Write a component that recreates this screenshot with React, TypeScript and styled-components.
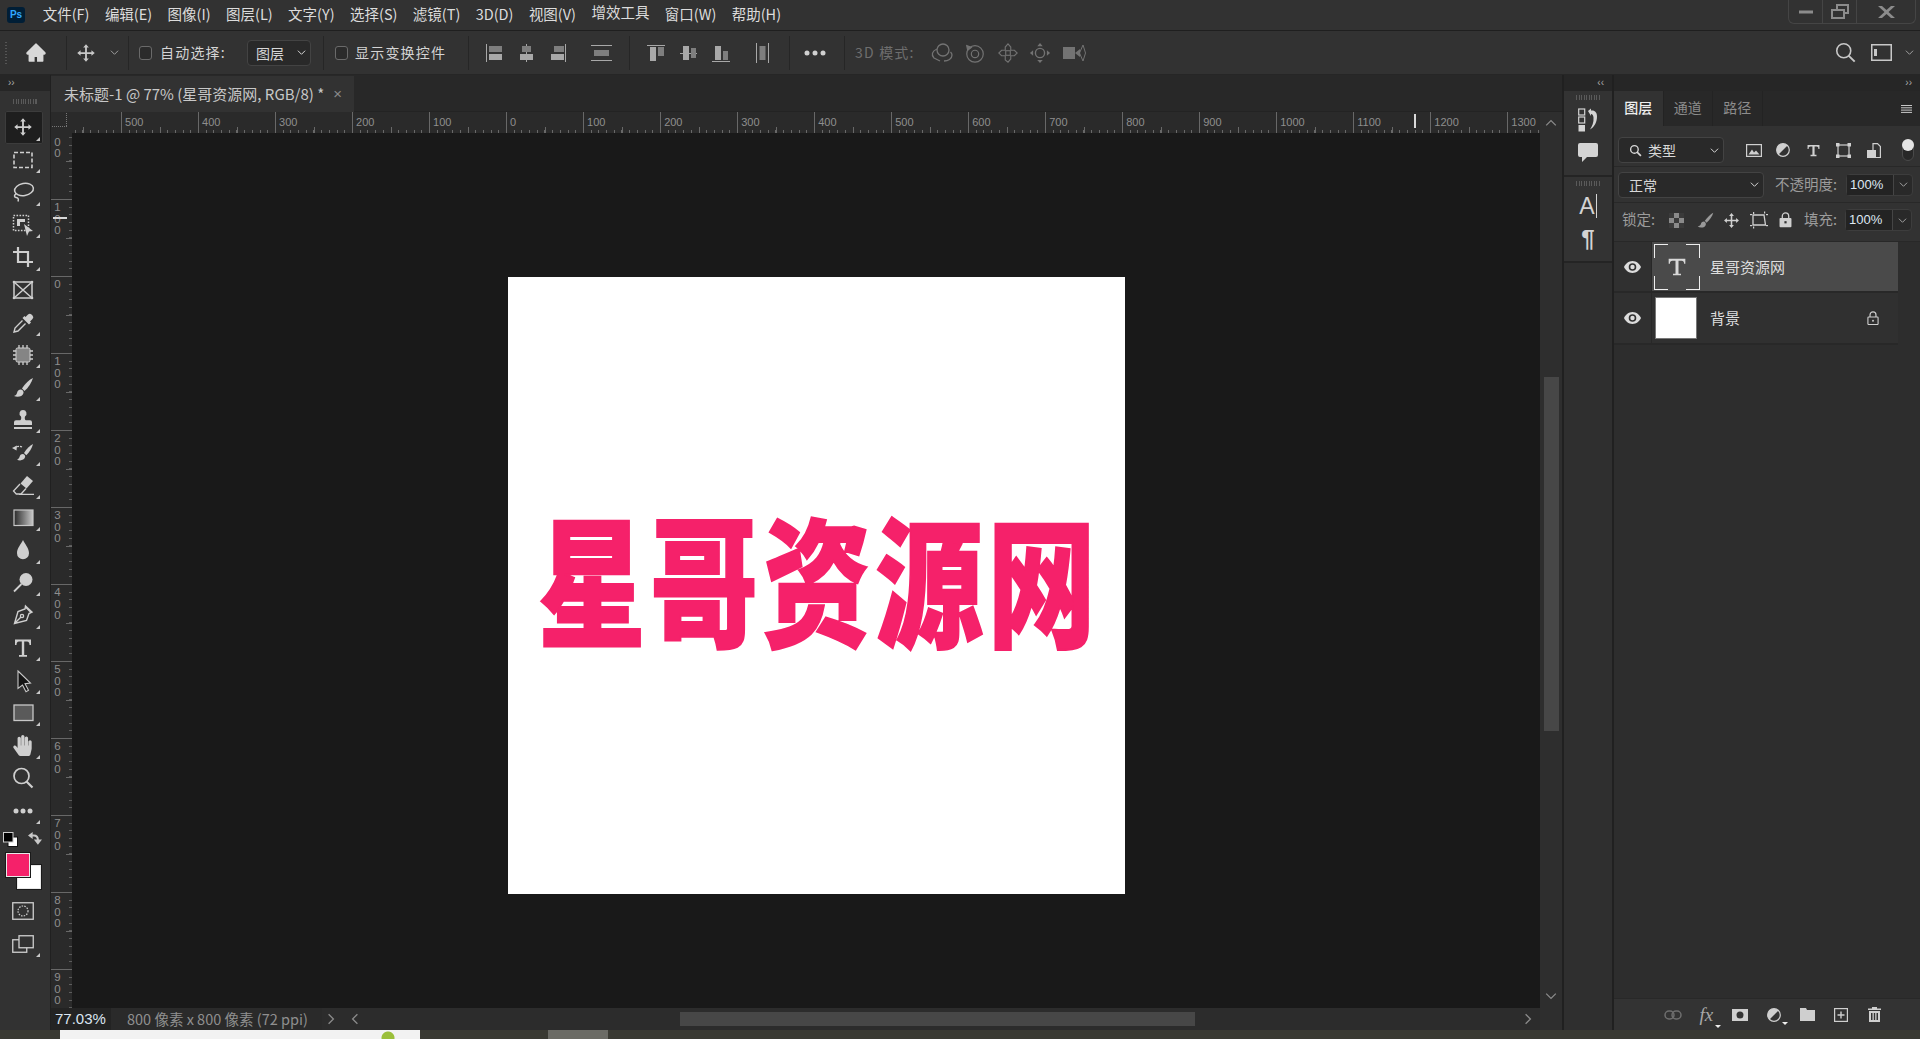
import React from 'react'
import styled, { createGlobalStyle } from 'styled-components'
import { FaHandPaper } from 'react-icons/fa'
import { AiFillHome } from 'react-icons/ai'

const GlobalStyle = createGlobalStyle`
    html, body {
        margin: 0;
        padding: 0;
        background: #3a3a33;
        overflow: hidden;
    }
    * {
        box-sizing: border-box;
    }
`

const UI_FONT = `"Noto Sans CJK SC", "Liberation Sans", sans-serif`
const NUM_FONT = `"Liberation Sans", "Noto Sans CJK SC", sans-serif`

const Window = styled.div`
    width: 1920px;
    height: 1039px;
    display: flex;
    flex-direction: column;
    background: #222;
    color: #d8d8d8;
    font-family: ${UI_FONT};
    overflow: hidden;
`

/* ---- menu bar ---- */

const MenuBar = styled.div`
    height: 31px;
    flex: none;
    display: flex;
    align-items: flex-start;
    background: #323232;
    border-bottom: 1px solid #1f1f1f;
`
const PsLogo = styled.div`
    width: 18px;
    height: 16px;
    margin: 7px 10px 0 7px;
    background: #001e36;
    border-radius: 3px;
    color: #31a8ff;
    font: bold 10px/16px ${NUM_FONT};
    text-align: center;
`
const MenuItem = styled.div<{ $up?: boolean }>`
    padding: 0 7.7px;
    font-size: 14.5px;
    line-height: 20px;
    margin-top: ${(p) => (p.$up ? 2 : 4)}px;
    color: #dcdcdc;
    white-space: nowrap;
`
const WinControls = styled.div`
    margin-left: auto;
    margin-right: 4px;
    width: 128px;
    height: 24px;
    display: flex;
    border: 1px solid #454545;
    border-top: none;
    border-radius: 0 0 6px 6px;
`
const WinButton = styled.div<{ $w: number; $last?: boolean }>`
    width: ${(p) => p.$w}px;
    flex: none;
    display: flex;
    align-items: center;
    justify-content: center;
    color: #8c8c8c;
    border-right: ${(p) => (p.$last ? 'none' : '1px solid #454545')};
`

/* ---- options bar ---- */

const OptionsBar = styled.div`
    height: 44px;
    flex: none;
    display: flex;
    align-items: center;
    background: #323232;
    border-bottom: 1px solid #262626;
`
const Grip = styled.div`
    width: 2px;
    height: 22px;
    margin: 0 18px 0 5px;
    background: repeating-linear-gradient(to bottom, #555 0 1px, transparent 1px 3px);
`
const OptSep = styled.div<{ $l: number; $r: number }>`
    width: 1px;
    height: 34px;
    flex: none;
    margin: 0 ${(p) => p.$r}px 0 ${(p) => p.$l}px;
    background: #262626;
`
const OptSlot = styled.div<{ $w: number; $ml?: number; $c?: string }>`
    width: ${(p) => p.$w}px;
    flex: none;
    margin-left: ${(p) => p.$ml ?? 0}px;
    display: flex;
    align-items: center;
    justify-content: center;
    color: ${(p) => p.$c ?? '#a0a0a0'};
`
const CheckBox = styled.div<{ $ml: number }>`
    width: 13px;
    height: 14px;
    flex: none;
    margin-left: ${(p) => p.$ml}px;
    border: 1px solid #6a6a6a;
    border-radius: 3px;
    background: #2b2b2b;
`
const OptLabel = styled.div<{ $ml: number; $c?: string; $w: number }>`
    width: ${(p) => p.$w}px;
    flex: none;
    margin-left: ${(p) => p.$ml}px;
    padding-bottom: 2px;
    font-size: 14px;
    letter-spacing: 1.2px;
    color: ${(p) => p.$c ?? '#d4d4d4'};
    white-space: nowrap;
`
const DropBox = styled.div<{ $w: number; $h: number; $ml?: number; $pl: number }>`
    width: ${(p) => p.$w}px;
    height: ${(p) => p.$h}px;
    flex: none;
    margin-left: ${(p) => p.$ml ?? 0}px;
    padding: 0 4px 0 ${(p) => p.$pl}px;
    display: flex;
    align-items: center;
    justify-content: space-between;
    background: #292929;
    border: 1px solid #434343;
    border-radius: 4px;
    font-size: 14px;
    color: #d8d8d8;
`
const DropText = styled.span`
    flex: 1;
    padding-left: 6px;
`
const OptRight = styled.div`
    margin-left: auto;
    display: flex;
    align-items: center;
    padding-right: 6px;
    color: #c8c8c8;
`

/* ---- workspace ---- */

const Workspace = styled.div`
    flex: 1;
    min-height: 0;
    display: flex;
    background: #202020;
`
const ToolPanel = styled.div`
    width: 50px;
    flex: none;
    margin-right: 1px;
    display: flex;
    flex-direction: column;
    background: #323232;
`
const CollapseBar = styled.div<{ $align?: string }>`
    height: 16px;
    flex: none;
    display: flex;
    align-items: center;
    justify-content: ${(p) => p.$align ?? 'flex-start'};
    padding: 0 8px;
    background: #262626;
    color: #a8a8a8;
    font: 10px/16px ${NUM_FONT};
`
const GripRow = styled.div<{ $h?: number }>`
    height: ${(p) => p.$h ?? 20}px;
    flex: none;
    display: flex;
    align-items: center;
    justify-content: center;
    &::before {
        content: '';
        width: 24px;
        height: 5px;
        background: repeating-linear-gradient(to right, #5a5a5a 0 1px, transparent 1px 2.5px);
    }
`
const ToolBtn = styled.div<{ $active?: boolean; $corner?: boolean }>`
    position: relative;
    height: 32.55px;
    flex: none;
    margin: 0 7px 0 5px;
    padding-right: 3px;
    display: flex;
    align-items: center;
    justify-content: center;
    color: #cfcfcf;
    background: ${(p) => (p.$active ? '#1e1e1e' : 'transparent')};
    box-shadow: ${(p) => (p.$active ? 'inset 0 0 0 1px #3c3c3c' : 'none')};
    border-radius: 2px;
    &::after {
        content: '';
        display: ${(p) => (p.$corner ? 'block' : 'none')};
        position: absolute;
        right: 3px;
        bottom: 3px;
        border-style: solid;
        border-width: 0 0 4px 4px;
        border-color: transparent transparent #c8c8c8 transparent;
    }
`
const MiniColors = styled.div`
    height: 15px;
    flex: none;
    margin-top: 5px;
    padding: 0 8px 0 3px;
    display: flex;
    justify-content: space-between;
    color: #c8c8c8;
`
const Swatches = styled.div`
    position: relative;
    height: 42px;
    flex: none;
    margin-top: 6px;
`
const Swatch = styled.div<{ $c: string; $x: number; $y: number; $z: number }>`
    position: absolute;
    left: ${(p) => p.$x}px;
    top: ${(p) => p.$y}px;
    width: 24px;
    height: 24px;
    z-index: ${(p) => p.$z};
    background: ${(p) => p.$c};
    border: 1px solid #e8e8e8;
    box-shadow: 0 0 0 1px #1a1a1a;
`

const DocArea = styled.div`
    flex: 1;
    min-width: 0;
    display: flex;
    flex-direction: column;
`
const TabRow = styled.div`
    height: 37px;
    flex: none;
    display: flex;
    background: #282828;
    border-bottom: 1px solid #232323;
`
const DocTab = styled.div`
    width: 303px;
    height: 36px;
    margin-top: 1px;
    padding: 0 0 2px 13px;
    display: flex;
    align-items: center;
    background: #323232;
    font-size: 15px;
    color: #c8c8c8;
    white-space: nowrap;
`
const TabClose = styled.span`
    margin-left: 9px;
    color: #8a8a8a;
    font: 15px ${NUM_FONT};
`

const RulerRow = styled.div`
    height: 21px;
    flex: none;
    display: flex;
`
const RulerCorner = styled.div`
    width: 21px;
    flex: none;
    background-color: #2a2a2a;
    background-image: repeating-linear-gradient(to right, #777 0 1px, transparent 1px 2px),
        repeating-linear-gradient(to bottom, #777 0 1px, transparent 1px 2px);
    background-size: 16px 1px, 1px 14px;
    background-position: 1px 14px, 15px 1px;
    background-repeat: no-repeat;
`
const HRuler = styled.div`
    flex: 1;
    min-width: 0;
    position: relative;
    display: flex;
    overflow: hidden;
    background: #2a2a2a;
`
const HCells = styled.div`
    display: flex;
    margin-left: -28px;
`
const HCell = styled.div`
    position: relative;
    width: 77.03px;
    height: 21px;
    flex: none;
    padding: 4px 0 0 3px;
    border-left: 1px solid #686868;
    font: 11px/13px ${NUM_FONT};
    color: #8e8e8e;
    background: repeating-linear-gradient(to right, transparent 0 6.7px, #686868 6.7px 7.7px) left bottom / 100% 3px no-repeat;
    &::after {
        content: '';
        position: absolute;
        left: 37.5px;
        bottom: 0;
        width: 1px;
        height: 6px;
        background: #686868;
    }
`
const HMarker = styled.div`
    position: absolute;
    left: 1342px;
    top: 2px;
    width: 2px;
    height: 14px;
    background: #d8d8d8;
`
const ScrollCap = styled.div`
    width: 22px;
    flex: none;
    display: flex;
    align-items: center;
    justify-content: center;
    background: #2e2e2e;
    color: #8a8a8a;
`
const MainRow = styled.div`
    flex: 1;
    min-height: 0;
    display: flex;
`
const VRuler = styled.div`
    position: relative;
    width: 21px;
    flex: none;
    overflow: hidden;
    background: #2a2a2a;
`
const VCells = styled.div`
    margin-top: -11px;
`
const VCell = styled.div`
    position: relative;
    height: 77.03px;
    padding: 2px 8px 0 0;
    border-top: 1px solid #686868;
    display: flex;
    flex-direction: column;
    align-items: center;
    font: 11.5px/11.5px ${NUM_FONT};
    color: #8e8e8e;
    background: repeating-linear-gradient(to bottom, transparent 0 6.7px, #5c5c5c 6.7px 7.7px) right top / 3px 100% no-repeat;
    &::after {
        content: '';
        position: absolute;
        top: 37.5px;
        right: 0;
        width: 6px;
        height: 1px;
        background: #686868;
    }
`
const VDigit = styled.span`
    height: 11.5px;
`
const VMarker = styled.div`
    position: absolute;
    left: 2px;
    top: 84px;
    width: 14px;
    height: 2px;
    background: #d8d8d8;
`
const Pasteboard = styled.div`
    flex: 1;
    min-width: 0;
    padding: 144px 0 0 436px;
    background: #191919;
`
const Document = styled.div`
    width: 617px;
    height: 617px;
    padding: 0 0 22px 4px;
    display: flex;
    align-items: center;
    justify-content: center;
    background: #fff;
`
const DocText = styled.div`
    font-family: "Noto Sans CJK SC", sans-serif;
    font-weight: 900;
    font-size: 140px;
    line-height: 1;
    letter-spacing: 6px;
    color: #f5216a;
    -webkit-text-stroke: 2px #f5216a;
    white-space: nowrap;
    transform: scaleX(0.77);
`
const VScroll = styled.div`
    width: 22px;
    flex: none;
    display: flex;
    flex-direction: column;
    align-items: center;
    background: #2e2e2e;
    color: #8a8a8a;
`
const VThumb = styled.div`
    width: 15px;
    height: 354px;
    margin-top: 244px;
    flex: none;
    background: #474747;
`
const VArrowBottom = styled.div`
    margin-top: auto;
    margin-bottom: 6px;
    display: flex;
`
const StatusBar = styled.div`
    height: 22px;
    flex: none;
    display: flex;
    align-items: stretch;
    background: #2c2c2c;
`
const ZoomBox = styled.div`
    width: 60px;
    flex: none;
    padding-left: 4px;
    background: #232323;
    color: #dbe6f2;
    font: 15px/22px ${NUM_FONT};
`
const InfoBox = styled.div`
    width: 211px;
    flex: none;
    padding-left: 16px;
    background: #2a2a2a;
    color: #8f8f8f;
    font-size: 14.5px;
    line-height: 21px;
    white-space: nowrap;
`
const StatusCell = styled.div<{ $w: number }>`
    width: ${(p) => p.$w}px;
    flex: none;
    display: flex;
    align-items: center;
    justify-content: center;
    color: #8a8a8a;
`
const HTrack = styled.div`
    flex: 1;
    min-width: 0;
    display: flex;
    align-items: center;
    padding-left: 310px;
    padding-right: 6px;
    color: #8a8a8a;
`
const HThumb = styled.div`
    width: 515px;
    height: 14px;
    background: #474747;
`
const HArrow = styled.div`
    margin-left: auto;
    display: flex;
`

/* ---- dock ---- */

const Dock = styled.div`
    width: 48px;
    flex: none;
    margin: 0 2px;
    display: flex;
    flex-direction: column;
    background: #2f2f2f;
`
const DockGroup = styled.div`
    height: 86px;
    flex: none;
    display: flex;
    flex-direction: column;
    align-items: center;
    background: #333;
    border-bottom: 2px solid #242424;
`
const DockBtn = styled.div`
    height: 33px;
    flex: none;
    display: flex;
    align-items: center;
    justify-content: center;
    color: #d4d4d4;
`
const DockA = styled.span`
    font: 23px/24px ${NUM_FONT};
    color: #d4d4d4;
    border-right: 1px solid #d4d4d4;
    padding-right: 1px;
`
const DockPara = styled.span`
    font: bold 24px/24px ${NUM_FONT};
    color: #d4d4d4;
`

/* ---- layers panel ---- */

const LayersPanel = styled.div`
    width: 306px;
    flex: none;
    display: flex;
    flex-direction: column;
    background: #2d2d2d;
`
const PanelTabs = styled.div`
    height: 35px;
    flex: none;
    display: flex;
    align-items: stretch;
    background: #282828;
    color: #c8c8c8;
`
const PanelTab = styled.div<{ $active?: boolean }>`
    width: 49.5px;
    flex: none;
    padding-bottom: 3px;
    display: flex;
    align-items: center;
    justify-content: center;
    font-size: 14px;
    font-weight: ${(p) => (p.$active ? 500 : 400)};
    color: ${(p) => (p.$active ? '#efefef' : '#8c8c8c')};
    background: ${(p) => (p.$active ? '#323232' : 'transparent')};
    border-right: 1px solid #232323;
`
const PanelMenu = styled.div`
    margin-left: auto;
    padding-right: 8px;
    display: flex;
    align-items: center;
`
const PanelRow = styled.div<{ $h: number; $pt?: number; $pb?: number }>`
    height: ${(p) => p.$h}px;
    flex: none;
    padding: ${(p) => p.$pt ?? 0}px 8px ${(p) => p.$pb ?? 0}px 4px;
    display: flex;
    align-items: center;
    background: #323232;
    border-bottom: 1px solid #282828;
    color: #cfcfcf;
`
const FilterIcon = styled.div<{ $w: number; $ml: number }>`
    width: ${(p) => p.$w}px;
    flex: none;
    margin-left: ${(p) => p.$ml}px;
    display: flex;
    justify-content: center;
    color: #d0d0d0;
`
const FilterToggle = styled.div`
    width: 12px;
    height: 22px;
    margin-left: 21px;
    border: 1px solid #4a4a4a;
    border-radius: 6px;
    background: #282828;
    &::before {
        content: '';
        display: block;
        width: 12px;
        height: 12px;
        margin: -1px 0 0 -1px;
        border-radius: 50%;
        background: #e4e4e4;
    }
`
const FieldLabel = styled.div<{ $ml: number; $w: number }>`
    width: ${(p) => p.$w}px;
    flex: none;
    margin-left: ${(p) => p.$ml}px;
    padding-bottom: 3px;
    font-size: 14.5px;
    color: #9c9c9c;
    white-space: nowrap;
`
const ValueField = styled.div<{ $ml?: number }>`
    width: 67px;
    height: 22px;
    flex: none;
    margin-left: ${(p) => p.$ml ?? 0}px;
    display: flex;
    background: #292929;
    border: 1px solid #3d3d3d;
    border-radius: 4px;
    font: 13px/20px ${NUM_FONT};
    color: #dfe8f2;
`
const ValueText = styled.div`
    width: 47px;
    flex: none;
    padding-left: 3px;
    background: #232323;
    border-right: 1px solid #454545;
`
const ValueArrow = styled.div`
    flex: 1;
    display: flex;
    align-items: center;
    justify-content: center;
    color: #a0a0a0;
`
const LayerList = styled.div`
    flex: 1;
    min-height: 0;
    display: flex;
    flex-direction: column;
    width: 284px;
`
const LayerRow = styled.div<{ $h: number }>`
    height: ${(p) => p.$h}px;
    flex: none;
    display: flex;
    align-items: stretch;
    border-bottom: 2px solid #282828;
`
const EyeCol = styled.div`
    width: 38px;
    flex: none;
    display: flex;
    align-items: center;
    justify-content: center;
    color: #dcdcdc;
    background: #303030;
    border-right: 1px solid #282828;
`
const LayerBody = styled.div<{ $selected?: boolean }>`
    flex: 1;
    min-width: 0;
    display: flex;
    align-items: center;
    background: ${(p) => (p.$selected ? '#4a4a4a' : '#303030')};
`
const TypeThumb = styled.div`
    width: 46px;
    height: 46px;
    margin-left: 2px;
    flex: none;
    display: flex;
    align-items: center;
    justify-content: center;
    color: #d8d8d8;
    background:
        linear-gradient(#eee, #eee) 0 0 / 14px 1px no-repeat,
        linear-gradient(#eee, #eee) 0 0 / 1px 14px no-repeat,
        linear-gradient(#eee, #eee) 100% 0 / 14px 1px no-repeat,
        linear-gradient(#eee, #eee) 100% 0 / 1px 14px no-repeat,
        linear-gradient(#eee, #eee) 0 100% / 14px 1px no-repeat,
        linear-gradient(#eee, #eee) 0 100% / 1px 14px no-repeat,
        linear-gradient(#eee, #eee) 100% 100% / 14px 1px no-repeat,
        linear-gradient(#eee, #eee) 100% 100% / 1px 14px no-repeat;
`
const WhiteThumb = styled.div`
    width: 40px;
    height: 40px;
    margin-left: 4px;
    flex: none;
    background: #fff;
    box-shadow: 0 0 0 1px #777;
`
const LayerName = styled.div<{ $ml: number }>`
    margin-left: ${(p) => p.$ml}px;
    padding-bottom: 1px;
    font-size: 15px;
    color: #dedede;
    white-space: nowrap;
`
const LayerLock = styled.div`
    margin-left: auto;
    margin-right: 19px;
    display: flex;
    color: #cfcfcf;
`
const PanelBottom = styled.div`
    height: 32px;
    flex: none;
    display: flex;
    align-items: center;
    padding-left: 42px;
    background: #333;
    border-top: 1px solid #282828;
    color: #cfcfcf;
`
const BottomBtn = styled.div<{ $c?: string; $corner?: boolean }>`
    position: relative;
    width: 33.6px;
    flex: none;
    display: flex;
    justify-content: center;
    color: ${(p) => p.$c ?? '#cfcfcf'};
    &::after {
        content: '';
        display: ${(p) => (p.$corner ? 'block' : 'none')};
        position: absolute;
        right: 2px;
        bottom: -3px;
        border-style: solid;
        border-width: 3px 3px 0;
        border-color: #eee transparent transparent;
    }
`
const FxMark = styled.span`
    font: italic 19px/20px "Liberation Serif", serif;
    color: #a8a8a8;
`

/* ---- desktop behind the window ---- */

const DesktopStrip = styled.div`
    height: 9px;
    flex: none;
    display: flex;
    background: #3a3a33;
`
const TaskWindow = styled.div`
    width: 360px;
    margin-left: 60px;
    background: radial-gradient(circle at 328px 8px, #9bbf3a 0 6px, transparent 7px), #f2f2f2;
`
const TaskBlock = styled.div`
    width: 60px;
    margin-left: 128px;
    background: #6b6b65;
`

/* ---- icons ---- */

const Svg = styled.svg`
    display: block;
    flex: none;
`
type IcoProps = { w?: number; h?: number; vb?: string; children: React.ReactNode }
const Ico: React.FC<IcoProps> = ({ w = 24, h, vb = '0 0 24 24', children }) => (
    <Svg width={w} height={h ?? w} viewBox={vb} fill="currentColor">
        {children}
    </Svg>
)
const Chevron: React.FC<{ dir?: 'down' | 'up' | 'left' | 'right'; s?: number }> = ({ dir = 'down', s = 9 }) => {
    const d = { down: 'M1 3l4 4 4-4', up: 'M1 7l4-4 4 4', left: 'M7 1L3 5l4 4', right: 'M3 1l4 4-4 4' }[dir]
    return (
        <Ico w={s} vb="0 0 10 10">
            <path d={d} fill="none" stroke="currentColor" strokeWidth="1.1" />
        </Ico>
    )
}

const MoveGlyph = <path d="M12 1.5l3.4 4h-2.3V11h5.4V8.6l4 3.4-4 3.4v-2.3h-5.4v5.4h2.3l-3.4 4-3.4-4h2.3v-5.4H5.5v2.3l-4-3.4 4-3.4V11h5.4V5.5H8.6z" />

const tools: { key: string; node: React.ReactNode; corner?: boolean; active?: boolean }[] = [
    { key: 'move', active: true, corner: true, node: <Ico w={20}>{MoveGlyph}</Ico> },
    { key: 'marquee', corner: true, node: <Ico w={24}><rect x="3" y="4.5" width="18" height="15" fill="none" stroke="currentColor" strokeWidth="1.6" strokeDasharray="4 2" /></Ico> },
    { key: 'lasso', corner: true, node: <Ico w={24}><g fill="none" stroke="currentColor" strokeWidth="1.5"><ellipse cx="13" cy="9.5" rx="9.5" ry="6" transform="rotate(-10 13 9.5)" /><path d="M5 14c-2 1-2 3 0 3.5s3 1 2 4" /></g></Ico> },
    { key: 'object', corner: true, node: <Ico w={24}><rect x="2.5" y="2.5" width="15" height="15" fill="none" stroke="currentColor" strokeWidth="1.5" strokeDasharray="1.6 1.4" /><path d="M6 6h8v3H9v4H6z" /><path d="M13 11l9 7-4 .5-2 4.5z" /></Ico> },
    { key: 'crop', corner: true, node: <Ico w={24}><path d="M7 2v15h15M2 7h15v15" fill="none" stroke="currentColor" strokeWidth="2.2" /></Ico> },
    { key: 'frame', node: <Ico w={24}><g fill="none" stroke="currentColor" strokeWidth="1.5"><rect x="3" y="4" width="18" height="16" /><path d="M3 4l18 16M21 4L3 20" /></g><circle cx="3" cy="4" r="1.3" /><circle cx="21" cy="4" r="1.3" /><circle cx="3" cy="20" r="1.3" /><circle cx="21" cy="20" r="1.3" /></Ico> },
    { key: 'eyedropper', corner: true, node: <Ico w={24}><path d="M20.5 3.5a2.5 2.5 0 0 0-3.5 0l-2.5 2.5-1-1-2 2 6.5 6.5 2-2-1-1 2.5-2.5a2.5 2.5 0 0 0 0-3.5z" /><path d="M11.5 9.5L4 17l-1 4 4-1 7.5-7.5" fill="none" stroke="currentColor" strokeWidth="1.4" /></Ico> },
    { key: 'patch', corner: true, node: <Ico w={24}><rect x="5" y="5" width="14" height="14" rx="1.5" fill="#858585" stroke="currentColor" /><path d="M8 2v3M12 2v3M16 2v3M8 19v3M12 19v3M16 19v3M2 8h3M2 12h3M2 16h3M19 8h3M19 12h3M19 16h3" stroke="currentColor" strokeWidth="1.3" /></Ico> },
    { key: 'brush', corner: true, node: <Ico w={24}><path d="M22 2c-3.5 1.5-8 5.5-11 10.5l2.5 2.5C17.5 11.5 20.5 6.5 22 2z" /><path d="M10 13.5c-2.5 0-3.5 1.5-4 3.5-.3 1.5-1.5 2.5-3 3 3 1.5 8.5 1 9.5-3 .3-1.3-.5-3-2.5-3.5z" /></Ico> },
    { key: 'stamp', corner: true, node: <Ico w={24}><path d="M12 2a3.5 3.5 0 0 0-2 6.4c.5 1.8.2 3.2-.8 3.9H5a2 2 0 0 0-2 2V17h18v-2.700a2 2 0 0 0-2-2h-4.200c-1-.7-1.300-2.100-.8-3.900A3.500 3.500 0 0 0 12 2z" /><rect x="3" y="19" width="18" height="2" /></Ico> },
    { key: 'history', corner: true, node: <Ico w={24}><path d="M22 3c-3 1.500-6.500 5-9 9l2.300 2.300C18.500 11 21 7 22 3z" /><path d="M12 13c-2.200 0-3 1.300-3.500 3-.3 1.200-1.200 2.200-2.500 2.700 2.600 1.300 7.300.9 8.100-2.600.3-1.100-.4-2.600-2.100-3.100z" /><path d="M11 6c-2.500-1.200-5-.8-7 .8" fill="none" stroke="currentColor" strokeWidth="1.300" strokeDasharray="2 1" /><path d="M1 7l5-2.500-.5 5z" /></Ico> },
    { key: 'eraser', corner: true, node: <Ico w={24}><path d="M16 3l6 5-6.500 7.500-6-5z" /><path d="M9 11l-6.500 7 2.800 3H10l5-5.500M8 21.300h15" fill="none" stroke="currentColor" strokeWidth="1.300" /></Ico> },
    {
        key: 'gradient',
        corner: true,
        node: (
            <Ico w={24}>
                <defs>
                    <linearGradient id="toolGrad" x1="0" x2="1" y1="0" y2="0">
                        <stop offset="0" stopColor="#2a2a2a" />
                        <stop offset="1" stopColor="#c8c8c8" />
                    </linearGradient>
                </defs>
                <rect x="3" y="4" width="19" height="15.500" fill="url(#toolGrad)" stroke="#c8c8c8" strokeWidth="1.200" />
            </Ico>
        ),
    },
    { key: 'blur', corner: true, node: <Ico w={24}><path d="M12 2c1.800 4 6 8 6 13.200a6 6 0 0 1-12 0C6 10 10.200 6 12 2z" /></Ico> },
    { key: 'dodge', corner: true, node: <Ico w={24}><circle cx="15" cy="8.500" r="6.500" /><path d="M10.500 13L3 20.500" stroke="currentColor" strokeWidth="1.800" /></Ico> },
    { key: 'pen', corner: true, node: <Ico w={24}><g fill="none" stroke="currentColor" strokeWidth="1.400"><path d="M14.500 3l6.500 6-3 1.500-2.500 7-12 3 3.500-12 7-2.500zM14 3.500l6.500 6.500M3.500 20.500L10 14" /><circle cx="11" cy="13" r="1.600" /></g></Ico> },
    { key: 'type', corner: true, node: <Ico w={24}><path d="M4 3.500h16v5.500h-1.500c0-2-.7-3.500-2.500-3.500h-2.800V19h2.800v1.800H8V19h2.800V5.500H8c-1.800 0-2.500 1.500-2.500 3.500H4z" /></Ico> },
    { key: 'direct', corner: true, node: <Ico w={24}><path d="M7 2l12.500 12-5.500.8 3.500 6.500-2.500 1.500-3.500-6.800L7 19.500z" fill="#141414" stroke="#c8c8c8" strokeWidth="1.100" /></Ico> },
    { key: 'shape', corner: true, node: <Ico w={24}><rect x="3" y="4" width="19" height="15.500" fill="#5a5a5a" stroke="#c8c8c8" strokeWidth="1.300" /></Ico> },
    { key: 'hand', corner: true, node: <FaHandPaper size={21} /> },
    { key: 'zoom', node: <Ico w={24}><circle cx="10.500" cy="10" r="7.500" fill="none" stroke="currentColor" strokeWidth="1.700" /><path d="M15.500 15.500l6 6" stroke="currentColor" strokeWidth="2.200" /></Ico> },
    { key: 'more', corner: true, node: <Ico w={24}><circle cx="5" cy="12" r="2.500" /><circle cx="12" cy="12" r="2.500" /><circle cx="19" cy="12" r="2.500" /></Ico> },
]

const BAR = '#a8a8a8'
const alignIcons: { w: number; ml: number; node: React.ReactNode }[] = [
    { w: 16, ml: 17, node: <><rect x="0" y="1" width="1" height="18" /><rect x="3" y="3" width="13" height="6" fill="#7e7e7e" /><rect x="3" y="11" width="13" height="6" /></> },
    { w: 15, ml: 17, node: <><rect x="7" y="1" width="1" height="18" /><rect x="3" y="3" width="9" height="6" fill="#7e7e7e" /><rect x="1" y="11" width="13" height="6" /></> },
    { w: 15, ml: 17, node: <><rect x="14" y="1" width="1" height="18" /><rect x="3" y="3" width="10" height="6" fill="#7e7e7e" /><rect x="0" y="11" width="13" height="6" /></> },
    { w: 21, ml: 25, node: <><rect x="0" y="2" width="21" height="1" /><rect x="0" y="17" width="21" height="1" /><rect x="3" y="7" width="15" height="6" fill="#7e7e7e" /></> },
]
const alignIconsV: { w: number; ml: number; node: React.ReactNode }[] = [
    { w: 18, ml: 17, node: <><rect x="0" y="2" width="18" height="1" /><rect x="3" y="4" width="6" height="14" /><rect x="11" y="4" width="6" height="9" fill="#7e7e7e" /></> },
    { w: 17, ml: 15, node: <><rect x="0" y="10" width="17" height="1" /><rect x="3" y="3" width="6" height="14" /><rect x="11" y="5" width="5" height="10" fill="#7e7e7e" /></> },
    { w: 18, ml: 15, node: <><rect x="0" y="18" width="18" height="1" /><rect x="3" y="3" width="6" height="14" /><rect x="11" y="8" width="5" height="9" fill="#7e7e7e" /></> },
    { w: 13, ml: 26, node: <><rect x="0" y="0" width="1" height="20" /><rect x="12" y="0" width="1" height="20" /><rect x="3.5" y="3" width="6" height="14" fill="#7e7e7e" /></> },
]

const icons3d: { w: number; ml: number; node: React.ReactNode }[] = [
    { w: 24, ml: 9, node: <g fill="none" stroke="currentColor" strokeWidth="1.3"><circle cx="13" cy="9" r="6" /><path d="M7 8c-5 2-6 6-3 9M14 20c4 0 8-2 8-6 0-1-.5-2-1.500-3M4 17l6 3" /></g> },
    { w: 22, ml: 10, node: <g fill="none" stroke="currentColor" strokeWidth="1.3"><circle cx="12" cy="13" r="9" /><circle cx="12" cy="13" r="4" /><path d="M3 4l5 2-4 3z" fill="currentColor" /></g> },
    { w: 22, ml: 11, node: <g fill="none" stroke="currentColor" strokeWidth="1.2"><path d="M12 2l3 3.500v3.500h4l3 3-3 3h-4v3.500L12 22l-3-2.500V15H5l-3-3 3-3h4V5.500z" /><rect x="9.5" y="9.5" width="5" height="5" /></g> },
    { w: 22, ml: 10, node: <><path d="M12 1l3 3.500H9zM12 23l-3-3.500h6zM1 12l3.500-3v6zM23 12l-3.500 3V9z" /><circle cx="12" cy="12" r="5" fill="none" stroke="currentColor" strokeWidth="1.5" /></> },
    { w: 24, ml: 11, node: <><rect x="1" y="6" width="12" height="12" /><path d="M13 12l5-4v8z" /><path d="M21 4l-3.500 8 3.500 8 2.500-8z" fill="none" stroke="currentColor" /></> },
]

const Eye = () => (
    <Ico w={17} h={12} vb="0 0 17 12">
        <path fillRule="evenodd" d="M8.5 0C4.500 0 1.500 2.800 0 6c1.500 3.200 4.500 6 8.500 6s7-2.800 8.500-6c-1.500-3.200-4.500-6-8.500-6zm0 2.200a3.800 3.800 0 1 1 0 7.600 3.800 3.800 0 0 1 0-7.600z" />
        <circle cx="8.5" cy="6" r="2.2" />
    </Ico>
)

const LockGlyph: React.FC<{ w: number; outline?: boolean }> = ({ w, outline }) => (
    <Ico w={w} h={w * 1.2} vb="0 0 14 17">
        <path d="M3.5 7V4.500a3.500 3.500 0 0 1 7 0V7" fill="none" stroke="currentColor" strokeWidth="1.4" />
        {outline ? (
            <>
                <rect x="1" y="7" width="12" height="9" rx="1" fill="none" stroke="currentColor" strokeWidth="1.3" />
                <rect x="6" y="10.5" width="2" height="2" />
            </>
        ) : (
            <>
                <rect x="0.5" y="6.5" width="13" height="10" rx="1" />
                <rect x="5.8" y="10" width="2.4" height="2.4" fill="#323232" />
            </>
        )}
    </Ico>
)

const menus = ['文件(F)', '编辑(E)', '图像(I)', '图层(L)', '文字(Y)', '选择(S)', '滤镜(T)', '3D(D)', '视图(V)', '增效工具', '窗口(W)', '帮助(H)']
const hLabels = ['', '500', '400', '300', '200', '100', '0', '100', '200', '300', '400', '500', '600', '700', '800', '900', '1000', '1100', '1200', '1300', '']
// the first row's hundreds digit sits above the ruler's top edge, so it is left out
const vLabels = [' 00', '100', '0', '100', '200', '300', '400', '500', '600', '700', '800', '900']

const App: React.FC = () => {
    return (
        <Window>
            <GlobalStyle />
            <MenuBar>
                <PsLogo>Ps</PsLogo>
                {menus.map((m) => (
                    <MenuItem key={m} $up={m === '增效工具'}>{m}</MenuItem>
                ))}
                <WinControls>
                    <WinButton $w={34}>
                        <Ico w={14} h={4} vb="0 0 14 4"><rect y="0.5" width="14" height="3" /></Ico>
                    </WinButton>
                    <WinButton $w={34}>
                        <Ico w={18} h={15} vb="0 0 18 15">
                            <path fillRule="evenodd" d="M5 0h13v10h-4v5H0V5h5zm2 2v3h7v3h2V2zM2 7v6h10V7z" />
                        </Ico>
                    </WinButton>
                    <WinButton $w={58} $last>
                        <Ico w={19} h={12} vb="0 0 19 12">
                            <path d="M1 0h4l4.500 4L14 0h4l-6.500 6 6.500 6h-4L9.500 8 5 12H1l6.500-6z" />
                        </Ico>
                    </WinButton>
                </WinControls>
            </MenuBar>

            <OptionsBar>
                <Grip />
                <OptSlot $w={22} $c="#d8d8d8"><AiFillHome size={25} /></OptSlot>
                <OptSep $l={19} $r={9} />
                <OptSlot $w={20} $c="#c8c8c8"><Ico w={20}>{MoveGlyph}</Ico></OptSlot>
                <OptSlot $w={10} $ml={13}><Chevron /></OptSlot>
                <OptSep $l={9} $r={0} />
                <CheckBox $ml={10} />
                <OptLabel $ml={8} $w={71}>自动选择:</OptLabel>
                <DropBox $w={64} $h={26} $ml={16} $pl={8}>
                    <span>图层</span>
                    <Chevron />
                </DropBox>
                <OptSep $l={12} $r={0} />
                <CheckBox $ml={11} />
                <OptLabel $ml={7} $w={92}>显示变换控件</OptLabel>
                <OptSep $l={21} $r={0} />
                {alignIcons.map((a, i) => (
                    <OptSlot key={i} $w={a.w} $ml={a.ml} $c={BAR}>
                        <Ico w={a.w} h={20} vb={`0 0 ${a.w} 20`}>{a.node}</Ico>
                    </OptSlot>
                ))}
                <OptSep $l={17} $r={0} />
                {alignIconsV.map((a, i) => (
                    <OptSlot key={i} $w={a.w} $ml={a.ml} $c={BAR}>
                        <Ico w={a.w} h={20} vb={`0 0 ${a.w} 20`}>{a.node}</Ico>
                    </OptSlot>
                ))}
                <OptSep $l={20} $r={0} />
                <OptSlot $w={22} $ml={14} $c="#d0d0d0">
                    <Ico w={22} h={6} vb="0 0 22 6"><circle cx="3" cy="3" r="2.5" /><circle cx="11" cy="3" r="2.5" /><circle cx="19" cy="3" r="2.5" /></Ico>
                </OptSlot>
                <OptSep $l={18} $r={0} />
                <OptLabel $ml={10} $w={66} $c="#6e6e6e">3D 模式:</OptLabel>
                {icons3d.map((a, i) => (
                    <OptSlot key={i} $w={a.w} $ml={a.ml} $c="#737373">
                        <Ico w={a.w}>{a.node}</Ico>
                    </OptSlot>
                ))}
                <OptRight>
                    <Ico w={21}>
                        <circle cx="10" cy="10" r="8" fill="none" stroke="currentColor" strokeWidth="1.8" />
                        <path d="M15.5 15.5l7 7" stroke="currentColor" strokeWidth="2.2" />
                    </Ico>
                    <OptSlot $w={21} $ml={15}>
                        <Ico w={21} h={17} vb="0 0 21 17">
                            <rect x="0.75" y="0.75" width="19.5" height="15.5" fill="none" stroke="#c8c8c8" strokeWidth="1.5" />
                            <rect x="3" y="5" width="3" height="7" fill="#c8c8c8" />
                        </Ico>
                    </OptSlot>
                    <OptSlot $w={10} $ml={12}><Chevron /></OptSlot>
                </OptRight>
            </OptionsBar>

            <Workspace>
                <ToolPanel>
                    <CollapseBar>››</CollapseBar>
                    <GripRow />
                    {tools.map((t) => (
                        <ToolBtn key={t.key} $active={t.active} $corner={t.corner}>{t.node}</ToolBtn>
                    ))}
                    <MiniColors>
                        <Ico w={15} vb="0 0 15 15">
                            <rect x="5" y="5" width="9.5" height="9.5" fill="#fff" stroke="#111" />
                            <rect x="0.5" y="0.5" width="9.5" height="9.5" fill="#000" stroke="#ccc" />
                        </Ico>
                        <Ico w={14} vb="0 0 24 24">
                            <path d="M7 6h3c4 0 7 3 7 8" fill="none" stroke="currentColor" strokeWidth="3.5" />
                            <path d="M8 0L0 6l8 6zM10 13h14l-7 9z" />
                        </Ico>
                    </MiniColors>
                    <Swatches>
                        <Swatch $c="#f5216a" $x={6} $y={0} $z={2} />
                        <Swatch $c="#ffffff" $x={17} $y={12} $z={1} />
                    </Swatches>
                    <ToolBtn>
                        <Ico w={22} h={18} vb="0 0 22 18">
                            <rect x="0.75" y="0.75" width="20.5" height="16.5" fill="none" stroke="currentColor" strokeWidth="1.3" />
                            <circle cx="11" cy="9" r="5" fill="none" stroke="currentColor" strokeWidth="1.2" strokeDasharray="1.5 1.2" />
                        </Ico>
                    </ToolBtn>
                    <ToolBtn $corner>
                        <Ico w={22} h={18} vb="0 0 22 18">
                            <rect x="0.75" y="4.75" width="14" height="12.5" fill="none" stroke="currentColor" strokeWidth="1.3" />
                            <rect x="7" y="0.75" width="14.25" height="12" fill="#323232" stroke="currentColor" strokeWidth="1.3" />
                        </Ico>
                    </ToolBtn>
                </ToolPanel>

                <DocArea>
                    <TabRow>
                        <DocTab>
                            未标题-1 @ 77% (星哥资源网, RGB/8) *
                            <TabClose>×</TabClose>
                        </DocTab>
                    </TabRow>
                    <RulerRow>
                        <RulerCorner />
                        <HRuler>
                            <HCells>
                                {hLabels.map((l, i) => (
                                    <HCell key={i}>{l}</HCell>
                                ))}
                            </HCells>
                            <HMarker />
                        </HRuler>
                        <ScrollCap><Chevron dir="up" s={12} /></ScrollCap>
                    </RulerRow>
                    <MainRow>
                        <VRuler>
                            <VCells>
                                {vLabels.map((l, i) => (
                                    <VCell key={i}>
                                        {l.split('').map((c, j) => (
                                            <VDigit key={j}>{c}</VDigit>
                                        ))}
                                    </VCell>
                                ))}
                            </VCells>
                            <VMarker />
                        </VRuler>
                        <Pasteboard>
                            <Document>
                                <DocText>星哥资源网</DocText>
                            </Document>
                        </Pasteboard>
                        <VScroll>
                            <VThumb />
                            <VArrowBottom><Chevron s={12} /></VArrowBottom>
                        </VScroll>
                    </MainRow>
                    <StatusBar>
                        <ZoomBox>77.03%</ZoomBox>
                        <InfoBox>800 像素 x 800 像素 (72 ppi)</InfoBox>
                        <StatusCell $w={18}><Chevron dir="right" s={12} /></StatusCell>
                        <StatusCell $w={30}><Chevron dir="left" s={12} /></StatusCell>
                        <HTrack>
                            <HThumb />
                            <HArrow><Chevron dir="right" s={12} /></HArrow>
                        </HTrack>
                        <ScrollCap />
                    </StatusBar>
                </DocArea>

                <Dock>
                    <CollapseBar $align="flex-end">‹‹</CollapseBar>
                    <DockGroup>
                        <GripRow $h={12} />
                        <DockBtn>
                            <Ico w={20} h={24} vb="0 0 20 24">
                                <rect x="0.7" y="1" width="6" height="6" fill="none" stroke="currentColor" strokeWidth="1.2" />
                                <rect x="0.7" y="9" width="6" height="6" fill="none" stroke="currentColor" strokeWidth="1.2" />
                                <rect x="0.5" y="17" width="6.5" height="6.5" />
                                <path d="M10 3l3-2.500v2c4-.5 6 2 6 6 0 6-3 11-7 13 2-3 4-7 3.500-12-.2-2-1-3.500-2.500-3.500v2z" />
                            </Ico>
                        </DockBtn>
                        <DockBtn>
                            <Ico w={20} h={19} vb="0 0 20 19">
                                <path d="M2 0h16a2 2 0 0 1 2 2v10a2 2 0 0 1-2 2H9l-5 5v-5H2a2 2 0 0 1-2-2V2a2 2 0 0 1 2-2z" />
                            </Ico>
                        </DockBtn>
                    </DockGroup>
                    <DockGroup>
                        <GripRow $h={12} />
                        <DockBtn><DockA>A</DockA></DockBtn>
                        <DockBtn><DockPara>¶</DockPara></DockBtn>
                    </DockGroup>
                </Dock>

                <LayersPanel>
                    <CollapseBar $align="flex-end">››</CollapseBar>
                    <PanelTabs>
                        <PanelTab $active>图层</PanelTab>
                        <PanelTab>通道</PanelTab>
                        <PanelTab>路径</PanelTab>
                        <PanelMenu>
                            <Ico w={11} h={8} vb="0 0 11 8">
                                <rect width="11" height="1" /><rect y="2.3" width="11" height="1" /><rect y="4.6" width="11" height="1" /><rect y="6.9" width="11" height="1" />
                            </Ico>
                        </PanelMenu>
                    </PanelTabs>
                    <PanelRow $h={41} $pt={8}>
                        <DropBox $w={106} $h={26} $pl={10}>
                            <Ico w={13}>
                                <circle cx="10" cy="10" r="7" fill="none" stroke="currentColor" strokeWidth="2.5" />
                                <path d="M15 15l7 7" stroke="currentColor" strokeWidth="3" />
                            </Ico>
                            <DropText>类型</DropText>
                            <Chevron />
                        </DropBox>
                        <FilterIcon $w={16} $ml={22}>
                            <Ico w={16} h={13} vb="0 0 16 13">
                                <rect x="0.6" y="0.6" width="14.8" height="11.8" fill="none" stroke="currentColor" strokeWidth="1.2" />
                                <path d="M2.5 10.5l3.500-5 2 3 2-2 3.500 4z" />
                            </Ico>
                        </FilterIcon>
                        <FilterIcon $w={14} $ml={14}>
                            <Ico w={14} vb="0 0 14 14">
                                <circle cx="7" cy="7" r="6.3" fill="none" stroke="currentColor" strokeWidth="1.2" />
                                <path d="M7 .7A6.300 6.300 0 0 0 2.500 11.500L11.500 2.500A6.300 6.300 0 0 0 7 .7z" />
                            </Ico>
                        </FilterIcon>
                        <FilterIcon $w={13} $ml={17}>
                            <Ico w={13} vb="0 0 24 24">
                                <path d="M1 2h22v7h-2c0-3-1-4.500-3.500-4.500H14V20h3.500v2.500h-11V20H10V4.500H6.500C4 4.500 3 6 3 9H1z" />
                            </Ico>
                        </FilterIcon>
                        <FilterIcon $w={15} $ml={16}>
                            <Ico w={15} vb="0 0 15 15">
                                <rect x="2" y="2" width="11" height="11" fill="none" stroke="currentColor" strokeWidth="1.2" />
                                <rect width="3.5" height="3.5" /><rect x="11.5" width="3.5" height="3.5" /><rect y="11.5" width="3.5" height="3.5" /><rect x="11.5" y="11.5" width="3.5" height="3.5" />
                            </Ico>
                        </FilterIcon>
                        <FilterIcon $w={14} $ml={16}>
                            <Ico w={14} h={15} vb="0 0 14 15">
                                <path d="M6 .6h4.500L13.400 3.500v11H6z" fill="none" stroke="currentColor" strokeWidth="1.2" />
                                <rect x="0" y="7" width="9" height="8" />
                            </Ico>
                        </FilterIcon>
                        <FilterToggle />
                    </PanelRow>
                    <PanelRow $h={36}>
                        <DropBox $w={146} $h={26} $pl={10}>
                            <span>正常</span>
                            <Chevron />
                        </DropBox>
                        <FieldLabel $ml={11} $w={71}>不透明度:</FieldLabel>
                        <ValueField><ValueText>100%</ValueText><ValueArrow><Chevron /></ValueArrow></ValueField>
                    </PanelRow>
                    <PanelRow $h={39} $pb={4}>
                        <FieldLabel $ml={4} $w={47}>锁定:</FieldLabel>
                        <FilterIcon $w={15} $ml={0}>
                            <Ico w={15} vb="0 0 15 15">
                                <rect width="15" height="15" fill="#8a8a8a" />
                                <path d="M0 0h5v5H0zM10 0h5v5h-5zM5 5h5v5H5zM0 10h5v5H0zM10 10h5v5h-5z" fill="#3a3a3a" />
                            </Ico>
                        </FilterIcon>
                        <FilterIcon $w={17} $ml={13}>
                            <Ico w={17} vb="0 0 24 24"><path d="M23 1c-4 2-8 6-12 11.500l2.500 2.500C18 11 21.500 6 23 1z" fill="#9a9a9a" /><path d="M10 13.500c-3 0-4 1.500-4.500 3.500-.3 1.500-2 3-4.500 3.500 3.500 2.500 10.500 2 11.500-3 .3-1.500-.5-3.500-2.500-4z" fill="#9a9a9a" /></Ico>
                        </FilterIcon>
                        <FilterIcon $w={16} $ml={9}><Ico w={17}>{MoveGlyph}</Ico></FilterIcon>
                        <FilterIcon $w={18} $ml={11}>
                            <Ico w={18} vb="0 0 18 18">
                                <path d="M3 4h11l1.500 10H3z" fill="none" stroke="currentColor" strokeWidth="1.3" />
                                <rect y="3" width="2" height="1.2" /><rect x="16" y="3" width="2" height="1.2" /><rect y="14" width="2" height="1.2" /><rect x="16" y="14" width="2" height="1.2" />
                                <rect x="3" y="1" width="1.2" height="2" /><rect x="3" y="15.5" width="1.2" height="2" /><rect x="14" y="0.5" width="1.2" height="2" />
                            </Ico>
                        </FilterIcon>
                        <FilterIcon $w={13} $ml={11}><LockGlyph w={13} /></FilterIcon>
                        <FieldLabel $ml={12} $w={41}>填充:</FieldLabel>
                        <ValueField><ValueText>100%</ValueText><ValueArrow><Chevron /></ValueArrow></ValueField>
                    </PanelRow>
                    <LayerList>
                        <LayerRow $h={51}>
                            <EyeCol><Eye /></EyeCol>
                            <LayerBody $selected>
                                <TypeThumb>
                                    <Ico w={20}>
                                        <path d="M2 2h20v6h-1.500c0-2.500-1-3.500-3-3.500H13.800V20h3v2H7.200v-2h3V4.500H6.500c-2 0-3 1-3 3.500H2z" />
                                    </Ico>
                                </TypeThumb>
                                <LayerName $ml={10}>星哥资源网</LayerName>
                            </LayerBody>
                        </LayerRow>
                        <LayerRow $h={52}>
                            <EyeCol><Eye /></EyeCol>
                            <LayerBody>
                                <WhiteThumb />
                                <LayerName $ml={14}>背景</LayerName>
                                <LayerLock><LockGlyph w={12} outline /></LayerLock>
                            </LayerBody>
                        </LayerRow>
                    </LayerList>
                    <PanelBottom>
                        <BottomBtn $c="#6e6e6e">
                            <Ico w={18} h={10} vb="0 0 18 10">
                                <g fill="none" stroke="currentColor" strokeWidth="1.5">
                                    <rect x="1" y="1" width="9" height="8" rx="4" />
                                    <rect x="8" y="1" width="9" height="8" rx="4" />
                                </g>
                            </Ico>
                        </BottomBtn>
                        <BottomBtn $corner><FxMark>fx</FxMark></BottomBtn>
                        <BottomBtn>
                            <Ico w={16} h={12} vb="0 0 16 12">
                                <path fillRule="evenodd" d="M0 0h16v12H0zm8 2.500a3.500 3.500 0 1 0 0 7 3.500 3.500 0 0 0 0-7z" />
                            </Ico>
                        </BottomBtn>
                        <BottomBtn $corner>
                            <Ico w={14} vb="0 0 14 14">
                                <circle cx="7" cy="7" r="6.3" fill="none" stroke="currentColor" strokeWidth="1.2" />
                                <path d="M7 .7A6.300 6.300 0 0 0 2.500 11.500L11.500 2.500A6.300 6.300 0 0 0 7 .7z" />
                            </Ico>
                        </BottomBtn>
                        <BottomBtn>
                            <Ico w={15} h={13} vb="0 0 15 13">
                                <path d="M0 0h6l1 2h8v11H0z" />
                            </Ico>
                        </BottomBtn>
                        <BottomBtn>
                            <Ico w={14} vb="0 0 14 14">
                                <rect x="0.6" y="0.6" width="12.8" height="12.8" fill="none" stroke="currentColor" strokeWidth="1.2" />
                                <path d="M6.3 3.500h1.400v2.800h2.800v1.400H7.700v2.800H6.300V7.700H3.500V6.300h2.800z" />
                            </Ico>
                        </BottomBtn>
                        <BottomBtn>
                            <Ico w={13} h={15} vb="0 0 13 15">
                                <path d="M4 0h5v1.500h4V3H0V1.500h4zM1 4h11v11H1zm2 2v7h1.500V6zm2.800 0v7h1.400V6zm2.700 0v7H10V6z" fillRule="evenodd" />
                            </Ico>
                        </BottomBtn>
                    </PanelBottom>
                </LayersPanel>
            </Workspace>

            <DesktopStrip>
                <TaskWindow />
                <TaskBlock />
            </DesktopStrip>
        </Window>
    )
}

export default App
